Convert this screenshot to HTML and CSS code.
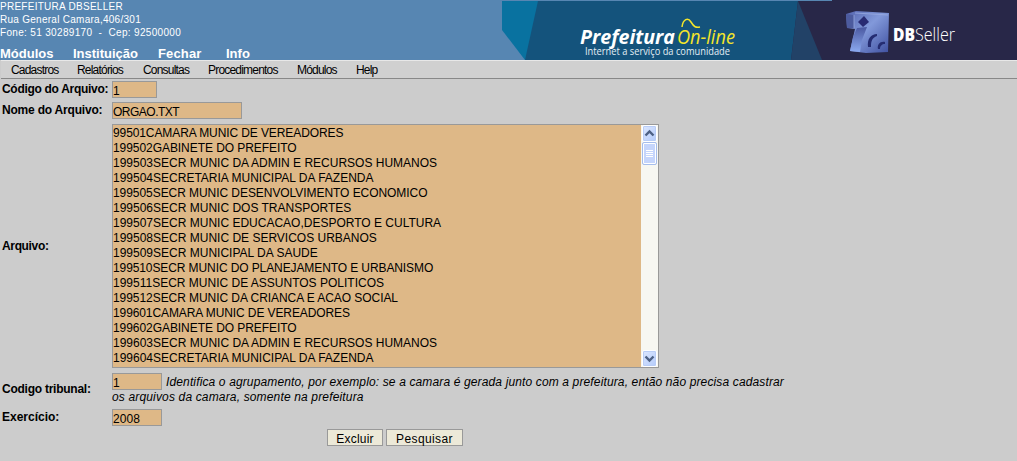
FILE: index.html
```
<!DOCTYPE html>
<html lang="pt-BR">
<head>
<meta charset="utf-8">
<title>Prefeitura On-line</title>
<link rel="stylesheet" href="styles.css">
</head>
<body>
<header class="header">
  <div class="header-left">
    <div class="address">
      <div class="name">PREFEITURA DBSELLER</div>
      <div class="street">Rua General Camara,406/301</div>
      <div class="phone">Fone: 51 30289170 &nbsp;- &nbsp;Cep: 92500000</div>
    </div>
    <nav class="topnav"><a class="t1">Módulos</a><a class="t2">Instituição</a><a class="t3">Fechar</a><a>Info</a></nav>
  </div>
  <svg class="banner" width="515" height="60" viewBox="502 0 515 60">
    <defs>
      <linearGradient id="cube" x1="0" y1="0" x2="1" y2="1">
        <stop offset="0" stop-color="#5464ae"/><stop offset=".45" stop-color="#8299da"/><stop offset="1" stop-color="#3f50a0"/>
      </linearGradient>
      <linearGradient id="side" x1="0" y1="0" x2="0" y2="1">
        <stop offset="0" stop-color="#4a58a0"/><stop offset="1" stop-color="#8caaf0"/>
      </linearGradient>
    </defs>
    <path d="M502 1H540V60H525L502 30Z" fill="#0972a0"/>
    <path d="M538 1H800V60H525Z" fill="#14537c"/>
    <path d="M798 1H832V0H1017V60H791Z" fill="#282748"/>
    <path d="M798 1L822 60H791Z" fill="#224267"/>
    <text x="580" y="44" class="logo-bold" textLength="95" lengthAdjust="spacingAndGlyphs">Prefeitura</text>
    <text x="677" y="44" class="logo-thin" textLength="58" lengthAdjust="spacingAndGlyphs">On-line</text>
    <path d="M682 27C683 19 688 17 691 22S696 28 700 27" fill="none" stroke="#f4e52a" stroke-width="1.5"/>
    <text x="585" y="55" class="logo-sub" textLength="145" lengthAdjust="spacingAndGlyphs">Internet a serviço da comunidade</text>
    <path d="M846 14L856 11L889 13L888 52L866 53L850 51L855 29L847 28Z" fill="url(#cube)"/>
    <path d="M846 14L854 15L854 28L847 28Z" fill="#4c5b9e"/>
    <path d="M857 28L867 27L862 40L860 52L850 51L853 37Z" fill="url(#side)"/>
    <path d="M858 22L864 16L869 22L863 27Z" fill="#282a72"/>
    <path d="M868 47C867 39 871 34 877 34V36C872 38 871 41 871 47ZM878 49C877 45 880 41 885 42V44C882 44 880 46 880 49Z" fill="#252d72"/>
    <path d="M855 13L888 15M854 15V28" fill="none" stroke="#98a9df" stroke-width=".8"/>
    <text x="893" y="41" class="logo-db" textLength="22" lengthAdjust="spacingAndGlyphs">DB</text>
    <text x="915" y="41" class="logo-seller" textLength="40" lengthAdjust="spacingAndGlyphs">Seller</text>
  </svg>
</header>
<nav class="menubar"><a class="m1">Cadastros</a><a class="m2">Relatórios</a><a class="m3">Consultas</a><a class="m4">Procedimentos</a><a class="m5">Módulos</a><a class="m6">Help</a></nav>
<main class="form">
  <div class="row r1"><b class="l1">Código do Arquivo:</b><div class="field w45">1</div></div>
  <div class="row r2"><b class="l2">Nome do Arquivo:</b><div class="field w130">ORGAO.TXT</div></div>
  <div class="row r3"><b class="l3">Arquivo:</b>
    <div class="area">
      <div class="lines">
        <div class="tight">99501CAMARA MUNIC DE VEREADORES</div>
        <div class="snug">199502GABINETE DO PREFEITO</div>
        <div>199503SECR MUNIC DA ADMIN E RECURSOS HUMANOS</div>
        <div>199504SECRETARIA MUNICIPAL DA FAZENDA</div>
        <div class="snug">199505SECR MUNIC DESENVOLVIMENTO ECONOMICO</div>
        <div>199506SECR MUNIC DOS TRANSPORTES</div>
        <div>199507SECR MUNIC EDUCACAO,DESPORTO E CULTURA</div>
        <div>199508SECR MUNIC DE SERVICOS URBANOS</div>
        <div>199509SECR MUNICIPAL DA SAUDE</div>
        <div class="tight">199510SECR MUNIC DO PLANEJAMENTO E URBANISMO</div>
        <div>199511SECR MUNIC DE ASSUNTOS POLITICOS</div>
        <div class="snug">199512SECR MUNIC DA CRIANCA E ACAO SOCIAL</div>
        <div class="tight">199601CAMARA MUNIC DE VEREADORES</div>
        <div class="snug">199602GABINETE DO PREFEITO</div>
        <div>199603SECR MUNIC DA ADMIN E RECURSOS HUMANOS</div>
        <div>199604SECRETARIA MUNICIPAL DA FAZENDA</div>
      </div>
      <div class="scroll">
        <div class="btn"><svg width="13" height="15"><path d="M2.5 9.5L6.5 5.5L10.5 9.5" class="chev"/></svg></div>
        <div class="thumb"><i></i><i></i><i></i><i></i></div>
        <div class="btn down"><svg width="13" height="15"><path d="M2.5 5.5L6.5 9.5L10.5 5.5" class="chev"/></svg></div>
      </div>
    </div>
  </div>
  <div class="row r4"><b class="l4">Codigo tribunal:</b>
    <div class="hint">
      <div class="hint-line"><div class="field w50">1</div><em class="h1">Identifica o agrupamento, por exemplo: se a camara é gerada junto com a prefeitura, então não precisa cadastrar</em></div>
      <em class="h2">os arquivos da camara, somente na prefeitura</em>
    </div>
  </div>
  <div class="row r5"><b class="l5">Exercício:</b><div class="field w50">2008</div></div>
  <div class="actions"><button class="b1">Excluir</button><button class="b2">Pesquisar</button></div>
</main>
</body>
</html>
```
FILE: styles.css
```
* { box-sizing: border-box; }
body { margin: 0; width: 1017px; height: 461px; overflow: hidden; background: #ccc; color: #000; font: 12px/15px "Liberation Sans", Arial, sans-serif; white-space: nowrap; }
.header { display: flex; height: 60px; background: #5786b2; color: #fff; }
.header-left { width: 502px; }
.address { font-size: 10px; line-height: 13px; height: 46px; letter-spacing: .27px; }
.phone { letter-spacing: .33px; }
.topnav { display: flex; font-size: 13px; font-weight: bold; line-height: 15px; }
.t1 { width: 73px; }
.t2 { width: 85px; }
.t3 { width: 68px; letter-spacing: .15px; }
.banner { display: block; }
.logo-bold { font: italic bold 20px "Open Sans", sans-serif; fill: #fff; }
.logo-thin { font: italic 20px "Open Sans", sans-serif; fill: #f4e52a; }
.logo-sub { font: 10px "Open Sans", sans-serif; fill: #e4eef4; }
.logo-db { font: 800 17px "Open Sans", sans-serif; fill: #fff; }
.logo-seller { font: 300 18px "Open Sans", sans-serif; fill: #fff; }
.menubar { display: flex; height: 19px; margin-left: 1px; padding-left: 10px; border-top: 1px solid #e8e8e8; border-bottom: 1px solid #888; background: #d0d0d0; line-height: 19px; }
.menubar a { letter-spacing: -.8px; }
.m1, .m2 { width: 66px; }
.m3 { width: 65px; }
.m4 { width: 89px; }
.m5 { width: 59px; }
.form { display: flex; flex-direction: column; padding-top: 2px; }
.row { display: flex; align-items: center; padding-left: 2px; }
.row > b { width: 110px; }
.l1 { letter-spacing: -.3px; }
.l2 { letter-spacing: -.2px; }
.l3 { letter-spacing: -.35px; }
.l4 { letter-spacing: -.25px; }
.r1 { height: 17px; margin-bottom: 4px; }
.r2 { height: 17px; margin-bottom: 5px; }
.r3 { height: 244px; margin-bottom: 5px; }
.r4 { height: 32px; margin-bottom: 4px; }
.r5 { height: 17px; margin-bottom: 3px; }
.field { height: 17px; border: 1px solid #999; background: #deb887; line-height: 18px; letter-spacing: .1px; }
.w45 { width: 45px; }
.w50 { width: 50px; }
.w130 { width: 130px; letter-spacing: -.5px; }
.area { display: flex; width: 547px; height: 244px; border: 1px solid #999; background: #deb887; }
.lines { width: 528px; padding-top: 1px; letter-spacing: 0; }
.snug { letter-spacing: -.06px; }
.tight { letter-spacing: -.1px; }
.scroll { display: flex; flex-direction: column; width: 17px; background: #f7f7f2; padding: 0 1px; }
.btn { height: 17px; border: 1px solid #fff; border-radius: 2px; background: linear-gradient(135deg, #dce7ff, #b4cbfa); box-shadow: inset 0 0 0 1px #b9cdf7; }
.btn svg { display: block; }
.chev { fill: none; stroke: #4d6185; stroke-width: 2.4; }
.down { margin-top: auto; }
.thumb { display: flex; flex-direction: column; align-items: center; gap: 1px; height: 23px; padding-top: 7px; border: 1px solid #a6bdec; border-radius: 2px; background: #c5d5fc; box-shadow: inset 0 0 0 1px #fff; }
.thumb i { width: 7px; height: 1px; background: #fff; }
.hint { height: 32px; }
.hint-line { display: flex; height: 17px; gap: 4px; }
.hint-line em { line-height: 19px; letter-spacing: .135px; }
.h2 { display: block; letter-spacing: .155px; }
.actions { display: flex; gap: 3px; padding-left: 327px; }
button { height: 17px; padding: 1px 0 0; border: 1px solid #999; background: #ece9d8; color: #000; font: 12px/16px "Liberation Sans", Arial, sans-serif; letter-spacing: .2px; }
.b1 { width: 56px; }
.b2 { width: 77px; letter-spacing: .4px; }
```
